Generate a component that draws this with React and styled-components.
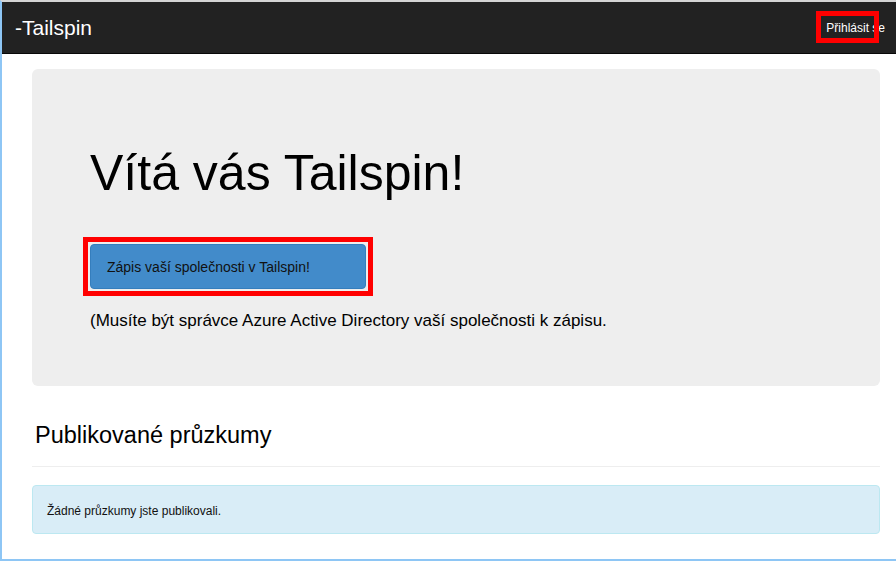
import React from 'react'
import styled, { createGlobalStyle } from 'styled-components'

const GlobalStyle = createGlobalStyle`
  html, body {
    margin: 0;
    padding: 0;
    background: #fff;
  }
  body {
    font-family: "Liberation Sans", Arial, sans-serif;
    color: #000;
  }
`

const App = () => {
  return (
    <>
      <GlobalStyle />
      <Frame>
        <Navbar>
          <Brand href="#">-Tailspin</Brand>
          <LoginLink href="#">Přihlásit se</LoginLink>
          <NavMarker />
        </Navbar>
        <Container>
          <Jumbotron>
            <Title>Vítá vás Tailspin!</Title>
            <Highlight>
              <PrimaryButton>Zápis vaší společnosti v Tailspin!</PrimaryButton>
            </Highlight>
            <Lead>(Musíte být správce Azure Active Directory vaší společnosti k zápisu.</Lead>
          </Jumbotron>
          <SectionTitle>Publikované průzkumy</SectionTitle>
          <Divider />
          <InfoAlert>Žádné průzkumy jste publikovali.</InfoAlert>
        </Container>
      </Frame>
    </>
  )
}

export default App

const Frame = styled.div`
  box-sizing: border-box;
  height: 561px;
  border-top: 2px solid #d4d4d4;
  border-left: 2px solid #8ec6f5;
  border-bottom: 2px solid #8ec6f5;
  overflow: hidden;
`

const Navbar = styled.nav`
  position: relative;
  display: flex;
  align-items: center;
  justify-content: space-between;
  height: 51px;
  padding: 0 11px 0 13px;
  background: #222;
  border-bottom: 1px solid #080808;
`

const Brand = styled.a`
  color: #fff;
  font-size: 21px;
  text-decoration: none;
  line-height: 24px;
  margin-top: 1px;
`

const LoginLink = styled.a`
  color: #fff;
  font-size: 12px;
  text-decoration: none;
  line-height: 14px;
`

const NavMarker = styled.span`
  position: absolute;
  right: 17px;
  top: 9px;
  width: 63px;
  height: 32px;
  box-sizing: border-box;
  border: 5px solid #f00;
`

const Container = styled.main`
  padding: 15px 16px 0 30px;
`

const Jumbotron = styled.section`
  background: #eee;
  border-radius: 6px;
  padding: 77px 58px 54px;
`

const Title = styled.h1`
  margin: 0 0 44px;
  font-size: 50px;
  font-weight: 400;
  line-height: 54px;
`

const Highlight = styled.div`
  display: inline-block;
  margin-left: -7px;
  margin-top: -7px;
  padding: 2px;
  border: 5px solid #f00;
`

const PrimaryButton = styled.button`
  display: block;
  box-sizing: border-box;
  width: 276px;
  height: 45px;
  padding: 0 0 0 16px;
  text-align: left;
  font-family: "Liberation Sans", Arial, sans-serif;
  font-size: 14px;
  color: #111;
  background: #428bca;
  border: 1px solid #357ebd;
  border-radius: 4px;
  cursor: pointer;
`

const Lead = styled.p`
  margin: 14px 0 0;
  font-size: 17px;
  line-height: 22px;
`

const SectionTitle = styled.h2`
  margin: 36px 0 0 3px;
  font-size: 23.5px;
  font-weight: 400;
  line-height: 26px;
`

const Divider = styled.hr`
  margin: 18px 0;
  border: 0;
  border-top: 1px solid #eee;
`

const InfoAlert = styled.div`
  padding: 17px 14px 13px;
  font-size: 12px;
  line-height: 17px;
  color: #111;
  background: #d9edf7;
  border: 1px solid #bce8f1;
  border-radius: 4px;
`
